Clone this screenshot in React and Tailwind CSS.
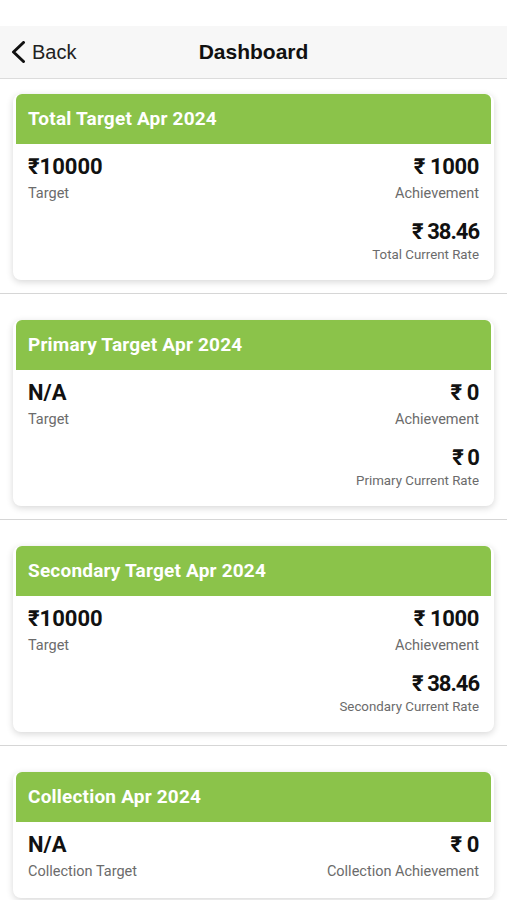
const cards = [
  {
    title: 'Total Target Apr 2024',
    target: '₹10000',
    targetLabel: 'Target',
    achievement: '₹ 1000',
    achievementLabel: 'Achievement',
    rate: '₹ 38.46',
    rateLabel: 'Total Current Rate',
  },
  {
    title: 'Primary Target Apr 2024',
    target: 'N/A',
    targetLabel: 'Target',
    achievement: '₹ 0',
    achievementLabel: 'Achievement',
    rate: '₹ 0',
    rateLabel: 'Primary Current Rate',
  },
  {
    title: 'Secondary Target Apr 2024',
    target: '₹10000',
    targetLabel: 'Target',
    achievement: '₹ 1000',
    achievementLabel: 'Achievement',
    rate: '₹ 38.46',
    rateLabel: 'Secondary Current Rate',
  },
  {
    title: 'Collection Apr 2024',
    target: 'N/A',
    targetLabel: 'Collection Target',
    achievement: '₹ 0',
    achievementLabel: 'Collection Achievement',
  },
]

function Card({ card }) {
  return (
    <div className="mx-[13px] rounded-[8px] bg-white shadow-[0_2px_7px_rgba(0,0,0,0.16)]">
      <div className="mx-[3px] h-[50px] rounded-t-[6px] bg-[#8bc34a] flex items-center px-[12px]">
        <span className="text-white text-[19px] font-bold tracking-[0.2px]">{card.title}</span>
      </div>
      <div className="px-[15px] pt-[11px] pb-[17px]">
        <div className="flex justify-between">
          <div>
            <div className="text-[22px] leading-[24px] font-bold text-[#111]">{card.target}</div>
            <div className="mt-[6px] text-[14.5px] leading-[18px] text-[#6b6b6b]">{card.targetLabel}</div>
          </div>
          <div className="text-right">
            <div className="text-[22px] leading-[24px] font-bold text-[#111] tracking-[-0.4px]">{card.achievement}</div>
            <div className="mt-[6px] text-[14.5px] leading-[18px] text-[#6b6b6b]">{card.achievementLabel}</div>
          </div>
        </div>
        {card.rate && (
          <div className="mt-[17px] text-right">
            <div className="text-[22px] leading-[24px] font-bold text-[#111] tracking-[-1px]">{card.rate}</div>
            <div className="mt-[3px] text-[13.3px] leading-[16px] text-[#6b6b6b]">{card.rateLabel}</div>
          </div>
        )}
      </div>
    </div>
  )
}

export default function App() {
  return (
    <div className="w-[507px] h-[900px] overflow-hidden bg-white" style={{ fontFamily: 'Roboto, "Noto Sans", sans-serif' }}>
      <div className="h-[26px] bg-white" />
      <div
        className="h-[53px] bg-[#f7f7f7] border-b border-[#dcdcdc] flex items-center relative"
        style={{ fontFamily: '"Liberation Sans", Arial, sans-serif' }}
      >
        <div className="flex items-center pl-[11px]">
          <svg width="15" height="22" viewBox="0 0 15 22" fill="none">
            <polyline points="12.5,1.5 2.5,11 12.5,20.5" stroke="#111" strokeWidth="3" strokeLinecap="round" strokeLinejoin="round" />
          </svg>
          <span className="ml-[6px] text-[20px] text-[#222]">Back</span>
        </div>
        <div className="absolute left-0 right-0 text-center pointer-events-none">
          <span className="text-[21px] font-bold text-[#111]">Dashboard</span>
        </div>
      </div>
      {cards.map((card, i) => (
        <div key={i} className={(i === 0 ? 'pt-[15px]' : 'pt-[26px]') + ' pb-[13px] border-b border-[#d6d6d6]'}>
          <Card card={card} />
        </div>
      ))}
    </div>
  )
}
